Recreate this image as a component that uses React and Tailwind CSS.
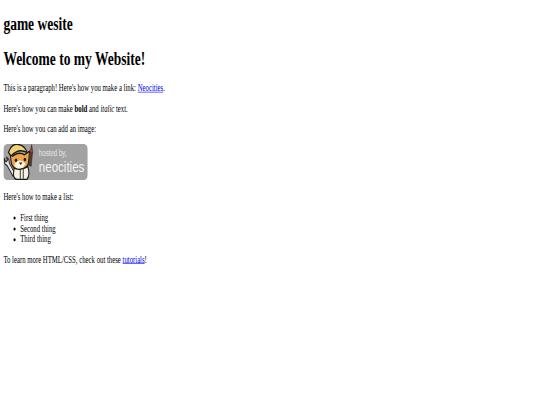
const NeocitiesBadge = () => (
  <svg width="200" height="60" viewBox="0 0 200 60" className="inline-block align-baseline">
    <rect x="0" y="0" width="200" height="60" rx="9" fill="#a2a2a2" />
    {/* wrench */}
    <path d="M2 24 L6 30 L10 27 L7 22 L13 26 L14 32 L28 50 L23 54 L9 36 L3 33 Z" fill="#e8e8e8" stroke="#222" strokeWidth="2" strokeLinejoin="round" />
    {/* paint brush */}
    <path d="M60 36 L64 14 L69 15 L66 37 Z" fill="#5b3d2c" stroke="#222" strokeWidth="1" />
    <path d="M63 14 L67 1 L70 15 Z" fill="#b23a24" stroke="#222" strokeWidth="1" />
    {/* body */}
    <path d="M26 40 Q20 58 32 59 L56 59 Q64 52 58 38 Z" fill="#f6f1e3" stroke="#1c1c1c" strokeWidth="2.5" />
    <path d="M40 42 L40 58 M47 42 L47 58" stroke="#1c1c1c" strokeWidth="2" />
    {/* head */}
    <path d="M16 14 L22 20 Q36 12 50 18 L62 12 L60 28 Q60 42 38 42 Q20 42 18 28 Z" fill="#eda648" stroke="#1c1c1c" strokeWidth="2.5" strokeLinejoin="round" />
    <path d="M26 34 Q38 22 52 32 Q50 40 38 41 Q28 41 26 34 Z" fill="#fbf6e8" />
    {/* hard hat */}
    <path d="M12 14 Q20 -2 36 1 Q50 2 56 14 Q36 6 18 20 Z" fill="#f0d272" stroke="#1c1c1c" strokeWidth="2.5" strokeLinejoin="round" />
    <ellipse cx="30" cy="27" rx="3" ry="3" fill="#1c1c1c" />
    <ellipse cx="51" cy="26" rx="3" ry="3" fill="#1c1c1c" />
    <path d="M37 31 L45 31 L41 35 Z" fill="#1c1c1c" />
    <text x="84" y="20" fill="#e6e6e6" fontSize="15" fontFamily="'Liberation Sans', sans-serif" textLength="66" lengthAdjust="spacingAndGlyphs">hosted by,</text>
    <text x="84" y="47" fill="#f4f4f4" fontSize="25" fontFamily="'Liberation Sans', sans-serif" textLength="108" lengthAdjust="spacingAndGlyphs">neocities</text>
  </svg>
);

export default function App() {
  return (
    <div className="w-[540px] h-[405px] overflow-hidden bg-white">
      {/* the shot is a 1280 wide page squeezed into 540x405 */}
      <div className="flow-root w-[1280px] h-[675px] origin-top-left scale-x-[0.421875] scale-y-[0.6] px-2 text-black text-base font-['Liberation_Serif',serif]">
        <h1 className="text-[32px] font-bold leading-[37px] my-[21.44px]">game wesite</h1>
        <h1 className="text-[32px] font-bold leading-[37px] my-[21.44px]">Welcome to my Website!</h1>
        <p className="leading-[18px] my-4">
          This is a paragraph! Here's how you make a link: <a href="#" className="text-[#0000ee] underline">Neocities</a>.
        </p>
        <p className="leading-[18px] my-4">
          Here's how you can make <strong className="font-bold">bold</strong> and <em className="italic">italic</em> text.
        </p>
        <p className="leading-[18px] my-4">Here's how you can add an image:</p>
        <p className="leading-[18px] my-4"><NeocitiesBadge /></p>
        <p className="leading-[18px] my-4">Here's how to make a list:</p>
        <ul className="list-disc pl-10 my-4 leading-[18px]">
          <li>First thing</li>
          <li>Second thing</li>
          <li>Third thing</li>
        </ul>
        <p className="leading-[18px] my-4">
          To learn more HTML/CSS, check out these <a href="#" className="text-[#0000ee] underline">tutorials</a>!
        </p>
      </div>
    </div>
  );
}
